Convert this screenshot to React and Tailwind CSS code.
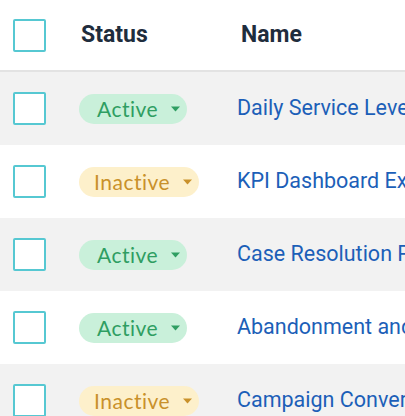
import React from "react";

const rows = [
  { status: "Active", name: "Daily Service Level Report", bg: "bg-[#f2f2f2]" },
  { status: "Inactive", name: "KPI Dashboard Export", bg: "bg-white" },
  { status: "Active", name: "Case Resolution Performance", bg: "bg-[#f2f2f2]" },
  { status: "Active", name: "Abandonment and Queue Report", bg: "bg-white" },
  { status: "Inactive", name: "Campaign Conversion Summary", bg: "bg-[#f2f2f2]" },
];

function Checkbox() {
  return <div className="w-[33px] h-[33px] border-2 border-[#56c8d2] rounded-[2px] bg-white shrink-0" />;
}

function Badge({ status }) {
  const active = status === "Active";
  return (
    <div
      className={
        active
          ? "flex items-center h-[30px] rounded-full bg-[#c9f0da] text-[#2f9e62] pl-[18px] pr-[7px]"
          : "flex items-center h-[30px] rounded-full bg-[#fdf0cb] text-[#c9912b] pl-[15px] pr-[7px]"
      }
      style={{ fontFamily: "Lato, 'Open Sans', sans-serif" }}
    >
      <span className="text-[21px] leading-none tracking-[0.5px]">{status}</span>
      <svg width="9" height="6" viewBox="0 0 9 6" className="ml-[13px]">
        <path d="M0 0.5 L9 0.5 L4.5 5.5 Z" fill="currentColor" />
      </svg>
    </div>
  );
}

export default function App() {
  return (
    <div className="w-[405px] h-[416px] overflow-hidden bg-white" style={{ fontFamily: "Roboto, sans-serif" }}>
      <div className="flex items-center h-[72px] border-b-2 border-[#e3e3e3]">
        <div className="w-[79px] pl-[13px] shrink-0">
          <Checkbox />
        </div>
        <div className="w-[160px] pl-[2px] shrink-0 text-[23px] font-bold text-[#1f2d3d]">Status</div>
        <div className="pl-[2px] text-[23px] font-bold text-[#1f2d3d] whitespace-nowrap">Name</div>
      </div>
      {rows.map((r, i) => (
        <div key={i} className={`flex items-center h-[73px] ${r.bg}`}>
          <div className="w-[79px] pl-[13px] shrink-0">
            <Checkbox />
          </div>
          <div className="w-[158px] shrink-0 flex">
            <Badge status={r.status} />
          </div>
          <div className="text-[21.5px] text-[#1c5fb8] whitespace-nowrap">{r.name}</div>
        </div>
      ))}
    </div>
  );
}
